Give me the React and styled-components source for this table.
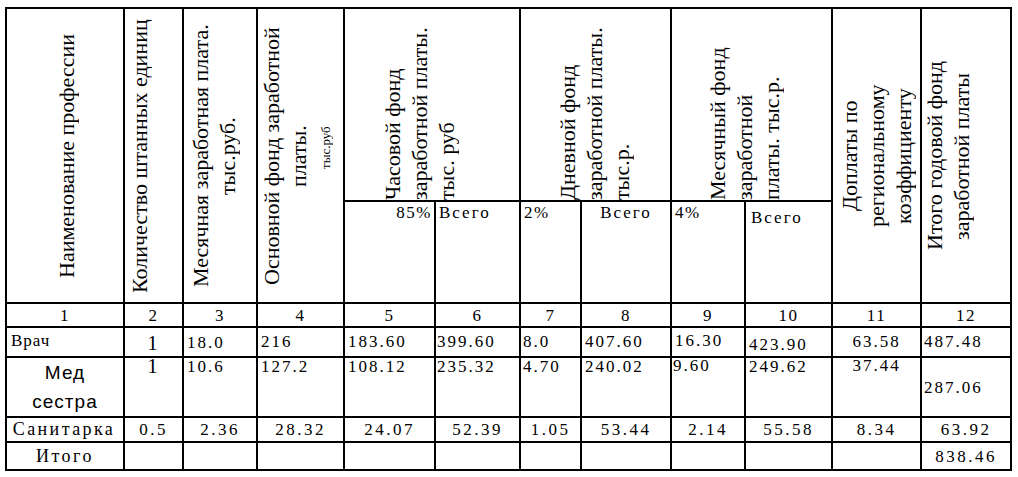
import React from 'react';
import styled, { createGlobalStyle } from 'styled-components';

const GlobalStyle = createGlobalStyle`
  html, body {
    margin: 0;
    padding: 0;
    background: #ffffff;
    font-family: 'Liberation Serif', 'Times New Roman', serif;
  }
  body {
    width: 1018px;
    height: 477px;
    overflow: hidden;
  }
`;

const Sheet = styled.table`
  border-collapse: collapse;
  table-layout: fixed;
  width: 1007px;
  margin: 7px 0 0 5px;
  font-family: 'Liberation Serif', 'Times New Roman', serif;
  color: #000000;
`;

const Row = styled.tr`
  height: ${(p) => p.$h}px;
`;

const HeadCell = styled.th`
  border: 2px solid #000000;
  padding: 0;
  font-weight: normal;
  vertical-align: bottom;
`;

const Turn = styled.div`
  display: flex;
  justify-content: center;
  height: ${(p) => p.$h}px;
  padding-left: ${(p) => (p.$shift > 0 ? p.$shift * 2 : 0)}px;
  padding-right: ${(p) => (p.$shift < 0 ? -p.$shift * 2 : 0)}px;
`;

const Label = styled.div`
  writing-mode: vertical-rl;
  transform: rotate(180deg);
  font-family: 'Liberation Serif', 'Times New Roman', serif;
  font-size: 22px;
  line-height: 27px;
  text-align: ${(p) => (p.$start ? 'start' : 'center')};
  white-space: nowrap;
`;

const Tiny = styled.span`
  display: inline-block;
  padding-top: 16px;
  font-size: 13px;
`;

const Cell = styled.td`
  border: 2px solid #000000;
  padding: ${(p) => p.$pt ?? 0}px 2px 0 ${(p) => p.$pl ?? 2}px;
  vertical-align: ${(p) => p.$va || 'top'};
  text-align: ${(p) => p.$align || 'left'};
  font-family: 'Liberation Serif', 'Times New Roman', serif;
  font-size: ${(p) => p.$fs || 17}px;
  line-height: 15px;
  letter-spacing: ${(p) => p.$ls ?? 2}px;
  white-space: nowrap;
`;

const Stack = styled.div`
  font-family: 'Liberation Sans', Arial, sans-serif;
  font-size: 19px;
  line-height: 29px;
  letter-spacing: 1px;
`;

const widths = [118, 59, 74, 87, 91, 85, 61, 90, 74, 87, 89, 90];

const doctor = [
  { v: 'Врач', pl: 4, pt: 5, ls: 1 },
  { v: '1', align: 'center', fs: 21, pt: 8 },
  { v: '18.0', pl: 3, pt: 7 },
  { v: '216', pl: 3, pt: 6 },
  { v: '183.60', pl: 3, pt: 6 },
  { v: '399.60', pl: 1, pt: 6 },
  { v: '8.0', pl: 2, pt: 6 },
  { v: '407.60', pl: 3, pt: 6 },
  { v: '16.30', pl: 3, pt: 5 },
  { v: '423.90', pl: 3, pt: 9 },
  { v: '63.58', align: 'center', pt: 6 },
  { v: '487.48', pl: 2, pt: 6 },
];

const nurse = [
  { v: '1', align: 'center', fs: 21, pt: 1 },
  { v: '10.6', pl: 3, pt: 1 },
  { v: '127.2', pl: 3, pt: 1 },
  { v: '108.12', pl: 3, pt: 1 },
  { v: '235.32', pl: 1, pt: 1 },
  { v: '4.70', pl: 2, pt: 1 },
  { v: '240.02', pl: 3, pt: 1 },
  { v: '9.60', pl: 1, pt: 0 },
  { v: '249.62', pl: 3, pt: 1 },
  { v: '37.44', align: 'center', pt: 0 },
  { v: '287.06', pl: 2, va: 'middle' },
];

const orderly = ['Санитарка', '0.5', '2.36', '28.32', '24.07', '52.39', '1.05', '53.44', '2.14', '55.58', '8.34', '63.92'];

function App() {
  return (
    <>
      <GlobalStyle />
      <Sheet>
        <colgroup>
          {widths.map((w, i) => (
            <col key={i} style={{ width: w }} />
          ))}
        </colgroup>
        <thead>
          <Row $h={193}>
            <HeadCell rowSpan={2}>
              <Turn $h={292} $shift={1}>
                <Label>Наименование профессии</Label>
              </Turn>
            </HeadCell>
            <HeadCell rowSpan={2}>
              <Turn $h={292} $shift={-14}>
                <Label>Количество штанных единиц</Label>
              </Turn>
            </HeadCell>
            <HeadCell rowSpan={2}>
              <Turn $h={292} $shift={-6}>
                <Label>
                  Месячная заработная плата.
                  <br />
                  тыс.руб.
                </Label>
              </Turn>
            </HeadCell>
            <HeadCell rowSpan={2}>
              <Turn $h={292} $shift={-2}>
                <Label>
                  Основной фонд заработной
                  <br />
                  платы.
                  <br />
                  <Tiny>тыс.руб</Tiny>
                </Label>
              </Turn>
            </HeadCell>
            <HeadCell colSpan={2}>
              <Turn $h={190} $shift={-13}>
                <Label $start>
                  Часовой фонд
                  <br />
                  заработной платы.
                  <br />
                  тыс. руб
                </Label>
              </Turn>
            </HeadCell>
            <HeadCell colSpan={2}>
              <Turn $h={190} $shift={-1}>
                <Label $start>
                  Дневной фонд
                  <br />
                  заработной платы.
                  <br />
                  тыс.р.
                </Label>
              </Turn>
            </HeadCell>
            <HeadCell colSpan={2}>
              <Turn $h={190} $shift={-7}>
                <Label $start>
                  Месячный фонд
                  <br />
                  заработной
                  <br />
                  платы. тыс.р.
                </Label>
              </Turn>
            </HeadCell>
            <HeadCell rowSpan={2}>
              <Turn $h={292}>
                <Label>
                  Доплаты по
                  <br />
                  региональному
                  <br />
                  коэффициенту
                </Label>
              </Turn>
            </HeadCell>
            <HeadCell rowSpan={2}>
              <Turn $h={292} $shift={-18}>
                <Label>
                  Итого годовой фонд
                  <br />
                  заработной платы
                </Label>
              </Turn>
            </HeadCell>
          </Row>
          <Row $h={102}>
            <Cell $align="right" $pt={3} $ls={1.5}>85%</Cell>
            <Cell $pl={3} $pt={3}>Всего</Cell>
            <Cell $pl={3} $pt={3} $ls={1.5}>2%</Cell>
            <Cell $align="center" $pt={3}>Всего</Cell>
            <Cell $pl={3} $pt={3} $ls={1.5}>4%</Cell>
            <Cell $pl={5} $pt={8}>Всего</Cell>
          </Row>
        </thead>
        <tbody>
          <Row $h={24}>
            {widths.map((w, i) => (
              <Cell key={i} $align="center" $va="middle" $ls={1.5}>
                {i + 1}
              </Cell>
            ))}
          </Row>
          <Row $h={30}>
            {doctor.map((c, i) => (
              <Cell key={i} $align={c.align} $pl={c.pl} $pt={c.pt} $fs={c.fs} $ls={c.ls}>
                {c.v}
              </Cell>
            ))}
          </Row>
          <Row $h={58}>
            <Cell $align="center">
              <Stack>
                Мед
                <br />
                сестра
              </Stack>
            </Cell>
            {nurse.map((c, i) => (
              <Cell key={i} $align={c.align} $pl={c.pl} $pt={c.pt} $fs={c.fs} $va={c.va}>
                {c.v}
              </Cell>
            ))}
          </Row>
          <Row $h={25}>
            {orderly.map((v, i) => (
              <Cell
                key={i}
                $align="center"
                $va="middle"
                $pl={i === 0 ? 0 : 2}
                $fs={i === 0 ? 18 : 17}
                $ls={i === 0 ? 2.4 : 2.5}
              >
                {v}
              </Cell>
            ))}
          </Row>
          <Row $h={28}>
            <Cell $align="center" $va="middle" $fs={18} $ls={2.5}>Итого</Cell>
            {widths.slice(2).map((w, i) => (
              <Cell key={i} />
            ))}
            <Cell $align="center" $va="middle" $ls={2.5}>838.46</Cell>
          </Row>
        </tbody>
      </Sheet>
    </>
  );
}

export default App;
